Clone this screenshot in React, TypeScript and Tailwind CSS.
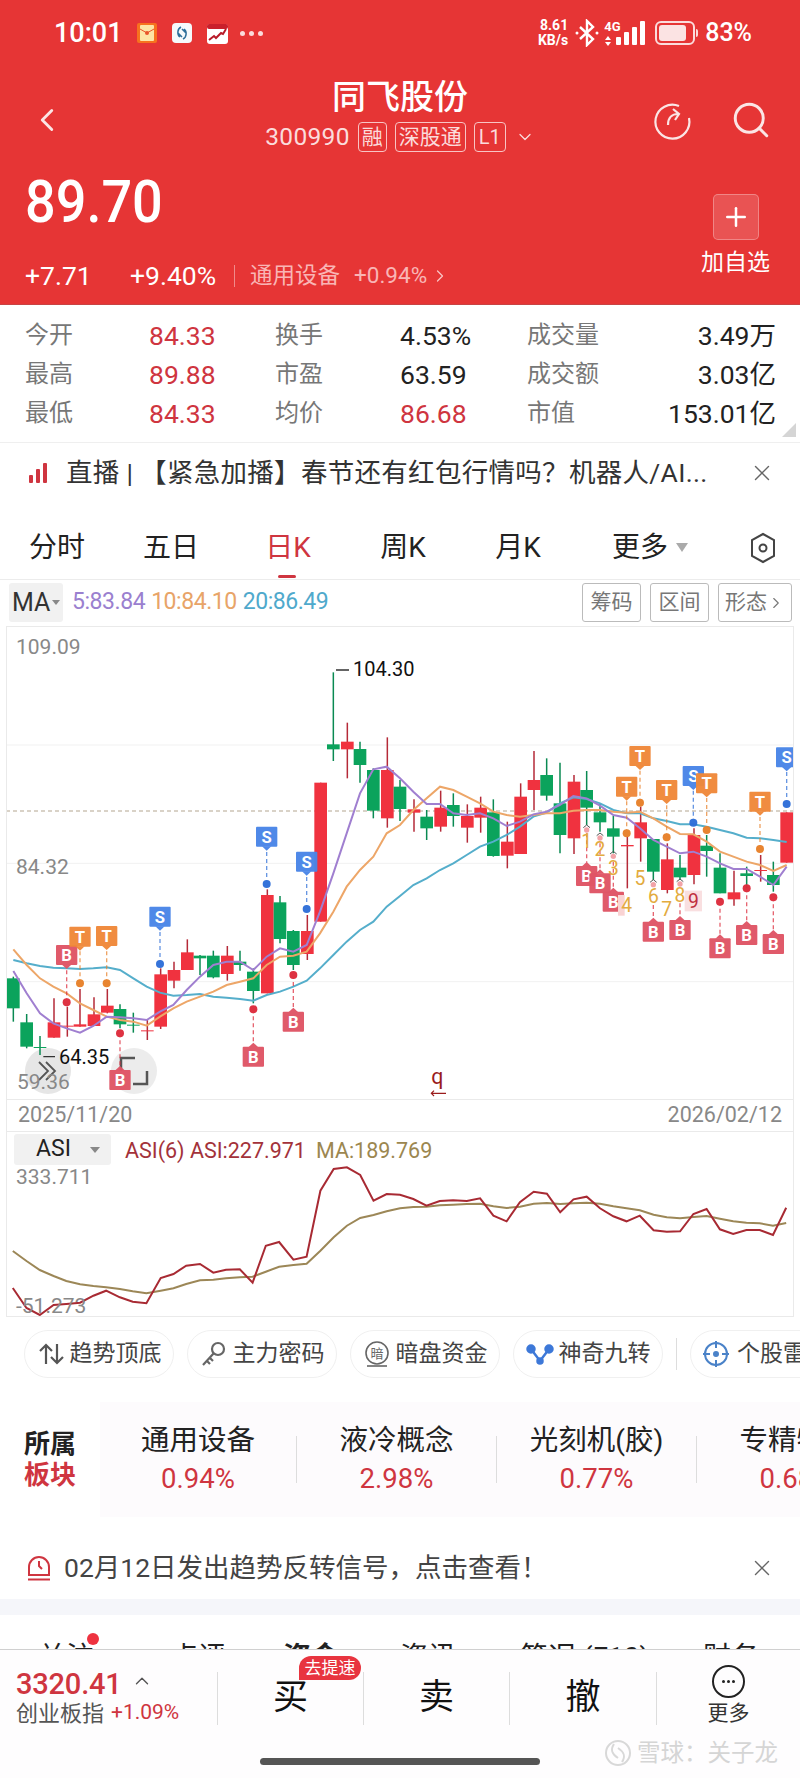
import { X, Plus, ChevronLeft, ChevronRight, ChevronDown, ChevronUp, Search } from "lucide-react";

// candles: [x, body top, body bottom, wick top, wick bottom, up?]  (coords are 3x page px, y from 640)
const candles: [number, number, number, number, number, boolean][] = [
  [40, 1015, 1105, 1010, 1145, false], [80, 1147, 1220, 1122, 1225, false], [120, 1221, 1224, 1188, 1245, false],
  [162, 1147, 1193, 1075, 1193, true], [202, 1157, 1160, 1100, 1190, true], [240, 1153, 1160, 1047, 1160, true],
  [282, 1123, 1158, 1072, 1158, true], [322, 1097, 1118, 1047, 1120, true], [360, 1107, 1153, 1093, 1165, false],
  [400, 1154, 1157, 1118, 1178, false], [442, 1171, 1174, 1140, 1200, true], [482, 1003, 1160, 985, 1167, true],
  [522, 990, 1022, 965, 1045, true], [562, 937, 990, 898, 990, true], [600, 947, 955, 945, 1005, false],
  [640, 947, 1012, 932, 1015, false], [682, 947, 1002, 918, 1022, true], [720, 965, 975, 932, 992, false],
  [760, 995, 1053, 985, 1090, false], [802, 765, 1060, 748, 1060, true], [840, 787, 897, 768, 910, false],
  [880, 873, 975, 870, 990, false], [922, 873, 942, 825, 960, true], [962, 428, 845, 428, 845, true],
  [1000, 313, 328, 97, 363, false], [1042, 305, 328, 248, 415, true], [1080, 327, 375, 305, 428, false],
  [1120, 390, 512, 385, 535, false], [1162, 390, 535, 292, 563, true], [1200, 440, 507, 420, 543, false],
  [1242, 508, 518, 478, 575, true], [1280, 530, 565, 510, 600, false], [1322, 503, 560, 452, 575, true],
  [1360, 495, 528, 460, 560, false], [1402, 528, 563, 493, 608, true], [1442, 503, 533, 470, 578, true],
  [1480, 517, 648, 478, 650, false], [1522, 605, 647, 545, 685, true], [1562, 470, 642, 430, 642, true],
  [1602, 420, 450, 333, 510, true], [1640, 405, 467, 355, 482, false], [1680, 490, 585, 368, 640, false],
  [1722, 425, 595, 405, 642, true], [1760, 450, 503, 393, 555, false], [1800, 517, 547, 490, 575, false],
  [1840, 565, 590, 528, 640, false], [1882, 615, 619, 590, 745, true], [1922, 547, 595, 500, 665, true],
  [1960, 597, 695, 597, 720, false], [2002, 658, 750, 610, 760, true], [2040, 683, 712, 645, 720, false],
  [2082, 585, 705, 565, 733, true], [2120, 617, 633, 585, 710, false], [2160, 683, 760, 640, 760, false],
  [2202, 757, 778, 692, 797, true], [2240, 700, 708, 680, 745, false], [2282, 690, 693, 645, 725, true],
  [2320, 705, 735, 665, 755, false], [2360, 517, 668, 517, 668, true],
];

const ma5 = "40,993 80,1060 120,1120 160,1150 200,1165 240,1178 280,1158 320,1130 360,1132 400,1135 440,1140 480,1115 520,1095 560,1050 600,1010 640,975 680,965 720,965 760,990 800,950 840,925 880,935 920,915 960,815 1000,700 1040,580 1080,460 1120,388 1160,380 1200,415 1240,455 1280,492 1320,492 1360,520 1400,525 1440,520 1480,535 1520,558 1560,545 1600,523 1640,515 1680,495 1720,468 1760,475 1800,497 1840,525 1880,533 1920,565 1960,600 2000,620 2040,640 2080,635 2120,650 2160,670 2200,687 2240,687 2280,710 2320,735 2360,680";
const ma10 = "40,928 80,975 120,1015 160,1040 200,1060 240,1090 280,1110 320,1130 360,1140 400,1145 440,1157 480,1130 520,1105 560,1085 600,1070 640,1055 680,1035 720,1025 760,1015 800,975 840,950 880,947 920,935 960,880 1000,815 1040,740 1080,690 1120,650 1160,580 1200,555 1240,510 1280,475 1320,440 1360,450 1400,470 1440,490 1480,515 1520,525 1560,530 1600,525 1640,520 1680,520 1720,512 1760,510 1800,510 1840,515 1880,518 1920,515 1960,535 2000,560 2040,582 2080,583 2120,605 2160,635 2200,650 2240,665 2280,675 2320,693 2360,675";
const ma20 = "40,960 80,970 120,978 160,983 200,985 240,987 280,985 320,982 360,990 400,1015 440,1040 480,1058 520,1067 560,1065 600,1062 640,1070 680,1073 720,1077 760,1082 800,1065 840,1055 880,1040 920,1022 960,985 1000,945 1040,905 1080,870 1120,845 1160,800 1200,768 1240,735 1280,715 1320,690 1360,670 1400,645 1440,620 1480,605 1520,585 1560,560 1600,530 1640,518 1680,490 1720,472 1760,477 1800,490 1840,510 1880,520 1920,520 1960,535 2000,543 2040,553 2080,553 2120,560 2160,570 2200,580 2240,593 2280,595 2320,600 2360,606";

type Mark = { t: "S" | "T" | "B"; x: number; y: number; dot?: number; from?: number };
const marks: Mark[] = [
  { t: "B", x: 200, y: 945, dot: 1087 }, { t: "T", x: 240, y: 890, dot: 1030 }, { t: "T", x: 320, y: 888, dot: 1030 },
  { t: "S", x: 480, y: 830, dot: 972 }, { t: "S", x: 800, y: 590, dot: 732 }, { t: "S", x: 920, y: 665, dot: 807 },
  { t: "B", x: 360, y: 1320, dot: 1180 }, { t: "B", x: 760, y: 1250, dot: 1108 }, { t: "B", x: 880, y: 1145, dot: 1005 },
  { t: "B", x: 1760, y: 708, from: 580 }, { t: "B", x: 1800, y: 730, from: 610 }, { t: "B", x: 1840, y: 785, from: 665 },
  { t: "B", x: 1960, y: 875, from: 795 }, { t: "B", x: 2040, y: 870, from: 790 }, { t: "B", x: 2160, y: 925, dot: 785 },
  { t: "B", x: 2240, y: 885, dot: 745 }, { t: "B", x: 2320, y: 912, dot: 772 },
  { t: "T", x: 1920, y: 348, dot: 488 }, { t: "T", x: 1880, y: 440, dot: 580 }, { t: "T", x: 2000, y: 450, dot: 592 },
  { t: "S", x: 2080, y: 408, dot: 548 }, { t: "T", x: 2120, y: 430, dot: 570 }, { t: "T", x: 2280, y: 485, dot: 627 },
  { t: "S", x: 2360, y: 352, dot: 492 },
];
const markColor = { S: "#4a86e8", T: "#f0893a", B: "#e05566" };
const dotColor = { S: "#2f6fd8", T: "#e8812a", B: "#dd2c3c" };

const nines: [string, number, number, boolean][] = [
  ["1", 1760, 603, true], ["2", 1800, 627, true], ["3", 1840, 682, true], ["4", 1880, 795, false], ["5", 1920, 713, false],
  ["6", 1960, 767, true], ["7", 2000, 807, false], ["8", 2040, 765, true], ["9", 2080, 782, false],
];

const asiRed = "25,537 52,597 78,618 105,588 130,585 157,581 183,560 208,545 235,565 260,578 287,583 315,507 340,495 365,470 392,465 418,491 443,482 470,481 495,521 521,410 547,399 575,452 601,443 628,245 654,180 680,175 706,198 732,275 758,255 784,257 810,270 836,290 862,276 888,274 915,276 941,268 967,320 993,337 1019,280 1046,248 1072,254 1098,310 1124,271 1150,263 1176,298 1202,322 1228,337 1254,320 1281,364 1307,368 1333,367 1359,315 1385,300 1411,361 1437,375 1463,363 1489,363 1515,378 1541,296";
const asiMa = "25,426 52,456 78,483 105,501 130,516 157,526 183,531 208,535 235,540 260,547 287,553 315,545 340,538 365,525 392,514 418,512 443,508 470,505 495,503 521,488 547,473 575,468 601,464 628,425 654,385 680,350 706,327 732,318 758,307 784,298 810,294 836,293 862,289 888,287 915,285 941,284 967,292 993,297 1019,293 1046,284 1072,282 1098,285 1124,283 1150,281 1176,284 1202,292 1228,298 1254,304 1281,317 1307,325 1333,328 1359,324 1385,321 1411,329 1437,337 1463,341 1489,343 1515,350 1541,342";
const asiPts = (s: string) =>
  s.split(" ").map((p) => {
    const [x, y] = p.split(",").map(Number);
    return `${(x / 1.96 - 6).toFixed(1)},${(y / 3 - 23).toFixed(1)}`;
  }).join(" ");

const stats = [
  ["今开", "84.33", "换手", "4.53%", "成交量", "3.49万"],
  ["最高", "89.88", "市盈", "63.59", "成交额", "3.03亿"],
  ["最低", "84.33", "均价", "86.68", "市值", "153.01亿"],
];

function KLine() {
  return (
    <svg viewBox="18 -42 2364 1419" className="absolute -left-px -top-px w-[788px] h-[473px]">
      {[315, 670, 1025].map((y) => (
        <line key={y} x1="18" x2="2382" y1={y} y2={y} stroke="#f1f1f1" strokeWidth="3" />
      ))}
      <line x1="18" x2="2382" y1="513" y2="513" stroke="#b3a58f" strokeWidth="3" strokeDasharray="12 9" />
      {candles.map(([x, t, b, wt, wb, up]) => (
        <g key={x}>
          <line x1={x} x2={x} y1={wt} y2={wb} stroke={up ? "#b52a38" : "#0a8a52"} strokeWidth="4.5" />
          <rect x={x - 19} y={t} width="38" height={b - t} fill={up ? "#f0323f" : "#0ba35c"} />
        </g>
      ))}
      <polyline points={ma20} fill="none" stroke="#55aecb" strokeWidth="6" />
      <polyline points={ma10} fill="none" stroke="#eda668" strokeWidth="6" />
      <polyline points={ma5} fill="none" stroke="#a07fd0" strokeWidth="6" />
      <path d="M1008 90H1047M130 1250H165" stroke="#333" strokeWidth="4" />
      {marks.map((m, i) => {
        const above = m.t !== "B" || m.x === 200;
        const dashA = m.dot ?? m.from ?? 0;
        const dashB = above ? m.y + 40 : m.y - 40;
        return (
          <g key={i} opacity={0.97}>
            <line x1={m.x} x2={m.x} y1={dashA} y2={dashB} stroke={dotColor[m.t]} strokeOpacity="0.75" strokeWidth="4" strokeDasharray="12 9" />
            {m.dot !== undefined && <circle cx={m.x} cy={m.dot} r="12" fill={dotColor[m.t]} />}
            <rect x={m.x - 32} y={m.y - 30} width="64" height="60" rx="3" fill={markColor[m.t]} />
            {m.t === "B" && m.x !== 200 ? (
              <path d={`M${m.x - 14} ${m.y - 29}L${m.x} ${m.y - 42}L${m.x + 14} ${m.y - 29}Z`} fill={markColor[m.t]} />
            ) : (
              <path d={`M${m.x - 14} ${m.y + 29}L${m.x} ${m.y + 42}L${m.x + 14} ${m.y + 29}Z`} fill={markColor[m.t]} />
            )}
            <text x={m.x} y={m.y + 18} textAnchor="middle" fill="#fff" fontSize="50" fontWeight="700" fontFamily="Roboto, sans-serif">{m.t}</text>
          </g>
        );
      })}
      {nines.map(([n, x, y, chevron]) => (
        <g key={n}>
          {n === "9" && <rect x={x - 26} y={y - 30} width="52" height="62" fill="#f9dfe0" />}
          {n === "4" && <rect x={x - 26} y={y - 30} width="20" height="62" fill="#f9d3d3" />}
          {chevron && (
            <>
              <path d={`M${x - 10} ${y - 40}L${x} ${y - 48}L${x + 10} ${y - 40}`} stroke="#555" strokeWidth="3" fill="none" />
              <circle cx={x} cy={y - 33} r="8" fill="#f2a3a8" />
            </>
          )}
          <text x={x} y={y + 22} textAnchor="middle" fill={n === "9" ? "#c03040" : "#e3ab3e"} fontSize="58" fontFamily="Roboto, sans-serif">{n}</text>
        </g>
      ))}
      <text x="1312" y="1332" textAnchor="middle" fill="#9a1c1c" fontSize="64" fontFamily="Roboto, sans-serif">q</text>
      <path d="M1338 1360H1294M1302 1352L1294 1360L1302 1368" stroke="#9a1c1c" strokeWidth="3.5" fill="none" />
    </svg>
  );
}

function StatusBar() {
  return (
    <div className="h-[66px] flex items-center pl-[54px] pr-[48px] text-white">
      <span className="text-[27px] font-medium w-[83px]">10:01</span>
      <svg width="20" height="20" viewBox="0 0 20 20" className="mr-[15px]">
        <rect width="20" height="20" rx="2" fill="#f7721e" />
        <rect x="3" y="2" width="14" height="16" rx="1" fill="#fde5a6" />
        <path d="M3 6l7 4 7-4" stroke="#e8552a" fill="none" />
        <circle cx="10" cy="10" r="2" fill="#e8552a" />
      </svg>
      <svg width="20" height="20" viewBox="0 0 20 20" className="mr-[15px]">
        <rect width="20" height="20" rx="4" fill="#f5f9fb" />
        <path d="M9 4C5 6 5 12 8 14M11 16c4-2 4-8 1-10M6 10l4 4M14 10l-4-4" stroke="#2d6f9a" strokeWidth="1.5" fill="none" />
      </svg>
      <svg width="21" height="21" viewBox="0 0 21 21" className="mr-[12px]">
        <rect y="1" width="21" height="20" rx="3" fill="#fff" />
        <rect y="1" width="21" height="5" rx="2" fill="#c9202c" />
        <path d="M2 17l5-4 2 2 5-5 2 1 3-5" stroke="#b81a28" strokeWidth="2" fill="none" />
      </svg>
      <span className="flex gap-[4px]">
        <i className="w-[5px] h-[5px] rounded-full bg-[#fbdcdc]" />
        <i className="w-[5px] h-[5px] rounded-full bg-[#fbdcdc]" />
        <i className="w-[5px] h-[5px] rounded-full bg-[#fbdcdc]" />
      </span>
      <div className="ml-auto flex items-center">
        <div className="text-[14px] font-bold leading-[15px] text-right w-[32px]">
          <div>8.61</div>
          <div>KB/s</div>
        </div>
        <svg width="26" height="28" viewBox="0 0 26 28" className="ml-[6px]" fill="none" stroke="#fff" strokeWidth="2.4">
          <path d="M6 8l13 12-6 6V2l6 6L6 20" />
          <circle cx="3" cy="14" r="1.5" fill="#fff" stroke="none" />
          <circle cx="23" cy="14" r="1.5" fill="#fff" stroke="none" />
        </svg>
        <div className="ml-[4px] w-[18px] text-[13px] font-bold leading-[14px]">
          4G
          <div className="flex flex-col items-center w-[8px] gap-[2px] mt-[2px]">
            <i className="w-0 h-0 border-x-[3px] border-x-transparent border-b-[4px] border-b-white" />
            <i className="w-0 h-0 border-x-[3px] border-x-transparent border-t-[4px] border-t-white" />
          </div>
        </div>
        <div className="flex items-end gap-[3px] h-[24px] -ml-[6px]">
          <i className="w-[5px] h-[8px] bg-white rounded-[1px]" />
          <i className="w-[5px] h-[13px] bg-white rounded-[1px]" />
          <i className="w-[5px] h-[18px] bg-white rounded-[1px]" />
          <i className="w-[5px] h-[24px] bg-white rounded-[1px]" />
        </div>
        <div className="ml-[10px] w-[40px] h-[24px] rounded-[6px] border-2 border-[#fbdcdc] p-[2px]">
          <div className="w-[83%] h-full bg-[#fbe3e3] rounded-[3px]" />
        </div>
        <i className="w-[2px] h-[8px] bg-[#fbdcdc] ml-[1px] rounded-r" />
        <span className="ml-[7px] text-[25px] font-medium">83%</span>
      </div>
    </div>
  );
}

function Header() {
  return (
    <div className="h-[305px] bg-[#e63535] border-b border-[#c84444] text-white shrink-0">
      <StatusBar />
      <div className="mt-[8px] h-[92px] grid grid-cols-[1fr_auto_1fr]">
        <div className="flex items-center pl-[28px]">
          <ChevronLeft size={38} strokeWidth={1.8} className="text-[#fbe5e5]" />
        </div>
        <div className="flex flex-col items-center">
          <div className="text-[34px] leading-[46px] h-[46px] font-medium">同飞股份</div>
          <div className="h-[34px] flex items-center text-[#fbdcdc]">
            <span className="text-[24.5px] tracking-[0.3px] mr-[8px]">300990</span>
            <span className="h-[30px] px-[3px] border border-[#f8c4c4] rounded-[4px] text-[21px] leading-[28px]">融</span>
            <span className="ml-[8px] h-[30px] px-[3px] border border-[#f8c4c4] rounded-[4px] text-[21px] leading-[28px]">深股通</span>
            <span className="ml-[8px] h-[30px] px-[4px] border border-[#f8c4c4] rounded-[4px] text-[20px] leading-[28px]">L1</span>
            <ChevronDown size={20} strokeWidth={1.5} className="ml-[9px]" />
          </div>
        </div>
        <div className="flex items-center justify-end pr-[28px] gap-[38px] text-[#fbe5e5]">
          <svg width="40" height="40" viewBox="0 0 40 40" fill="none" stroke="currentColor" strokeWidth="2.2">
            <path d="M27 6A17 17 0 1 0 37 18" />
            <path d="M16 25c0-7 4-11 10-11M21 9l6 5-4 6" />
          </svg>
          <Search size={42} strokeWidth={1.7} />
        </div>
      </div>
      <div className="flex justify-between">
        <div className="pl-[25px]">
          <div className="h-[72px] text-[54px] leading-[72px] font-medium scale-y-110 origin-center">89.70</div>
          <div className="mt-[21px] h-[34px] flex items-center">
            <span className="text-[26.5px] w-[105px]">+7.71</span>
            <span className="text-[26.5px] w-[104px]">+9.40%</span>
            <i className="w-px h-[22px] bg-[#f08a8a]" />
            <span className="ml-[15px] text-[22.5px] text-[#f9b5b5]">通用设备</span>
            <span className="ml-[14px] text-[22.5px] text-[#f9b5b5]">+0.94%</span>
            <ChevronRight size={20} strokeWidth={1.5} className="text-[#f9c5c5] ml-[3px]" />
          </div>
        </div>
        <div className="pr-[30px] pt-[28px] flex flex-col items-center w-[99px] shrink-0">
          <div className="w-[46px] h-[46px] rounded-[5px] bg-white/15 border border-white/30 flex items-center justify-center">
            <Plus size={30} strokeWidth={2} />
          </div>
          <div className="mt-[8px] h-[30px] text-[23px] leading-[30px] whitespace-nowrap">加自选</div>
        </div>
      </div>
    </div>
  );
}

function Tabs() {
  return (
    <div className="h-[64px] flex items-center border-b border-[#ececec] text-[#222] text-[28px]">
      <div className="w-[114px] text-center">分时</div>
      <div className="w-[114px] text-center">五日</div>
      <div className="relative w-[120px] h-full flex items-center justify-center text-[#cf3540]">
        日K
        <i className="absolute left-[50px] bottom-[1px] w-[18px] h-[3px] rounded bg-[#cf3540]" />
      </div>
      <div className="w-[110px] text-center">周K</div>
      <div className="w-[120px] text-center">月K</div>
      <div className="w-[124px] flex items-center justify-center pl-[20px]">
        更多
        <i className="ml-[8px] w-0 h-0 border-x-[6px] border-x-transparent border-t-[9px] border-t-[#aaa]" />
      </div>
      <div className="flex-1 flex justify-center pl-[24px]">
        <svg width="28" height="32" viewBox="0 0 28 32" fill="none" stroke="#444" strokeWidth="2">
          <path d="M14 2l11 6v16l-11 6-11-6V8z" />
          <circle cx="14" cy="16" r="3.5" />
        </svg>
      </div>
    </div>
  );
}

const chips = [
  { label: "趋势顶底", icon: <svg width="28" height="28" viewBox="0 0 28 28" fill="none" stroke="#555" strokeWidth="2.2"><path d="M9 24V5M3 11l6-6 6 6M20 4v19M14 17l6 6 6-6" /></svg> },
  { label: "主力密码", icon: <svg width="28" height="28" viewBox="0 0 28 28" fill="none" stroke="#666" strokeWidth="2.2"><circle cx="18" cy="9" r="6" /><path d="M14 13L3 25M7 21l3 3M10 18l3 3" /></svg> },
  { label: "暗盘资金", icon: <svg width="28" height="28" viewBox="0 0 28 28" fill="none" stroke="#666" strokeWidth="1.6"><circle cx="14" cy="13" r="11" /><path d="M4 26h20" /><text x="14" y="18" textAnchor="middle" fontSize="13" fill="#666" stroke="none" fontFamily="Noto Sans CJK SC">暗</text></svg> },
  { label: "神奇九转", icon: <svg width="28" height="28" viewBox="0 0 28 28" fill="none" stroke="#3d78d8" strokeWidth="2.5"><path d="M5 9l9 12 9-12" /><circle cx="5" cy="9" r="3.5" fill="#3d78d8" /><circle cx="23" cy="9" r="3.5" fill="#3d78d8" /><circle cx="14" cy="21" r="2.5" fill="#3d78d8" /></svg> },
];

function Chips() {
  return (
    <div className="mt-[13px] h-[48px] pl-[24px] flex items-center gap-[13px] overflow-hidden">
      {chips.map((c) => (
        <div key={c.label} className="w-[150px] h-[48px] shrink-0 rounded-[24px] border border-[#f0f0f0] flex items-center justify-center gap-[5px] text-[#444] text-[23px]">
          {c.icon}
          <span>{c.label}</span>
        </div>
      ))}
      <i className="w-px h-[32px] shrink-0 bg-[#ddd]" />
      <div className="w-[150px] h-[48px] shrink-0 rounded-[24px] border border-[#f0f0f0] flex items-center pl-[12px] gap-[8px] text-[#444] text-[23px] whitespace-nowrap">
        <svg width="26" height="26" viewBox="0 0 26 26" className="shrink-0" fill="none" stroke="#4a82c8" strokeWidth="2">
          <circle cx="13" cy="13" r="11" />
          <path d="M13 0v7M13 19v7M0 13h7M19 13h7" />
          <circle cx="13" cy="13" r="2" fill="#4a82c8" />
        </svg>
        个股雷达
      </div>
    </div>
  );
}

const boards = [
  ["通用设备", "0.94%", "w-[196px]"],
  ["液冷概念", "2.98%", "w-[199px]"],
  ["光刻机(胶)", "0.77%", "w-[199px]"],
  ["专精特新", "0.68%", "w-[199px]"],
];

export default function App() {
  return (
    <div className="w-[800px] h-[1778px] bg-white overflow-hidden relative font-[family-name:Roboto,'Noto_Sans_CJK_SC',sans-serif]">
      <Header />

      {/* quote table */}
      <div className="relative h-[138px] pt-[11px] pl-[25px] border-b border-[#efefef]">
        <div className="grid grid-cols-[124px_126px_125px_127px_100px_149px] text-[24px] leading-[39px]">
          {stats.map((row) =>
            row.map((cell, i) => (
              <div
                key={row[0] + i}
                className={
                  i % 2 === 0
                    ? "text-[#777]"
                    : i === 5
                      ? "text-right text-[#222] text-[26.5px] whitespace-nowrap"
                      : (i === 1 || cell === "86.68")
                        ? "text-[#cf3540] text-[26.5px]"
                        : "text-[#222] text-[26.5px]"
                }
              >
                {cell}
              </div>
            ))
          )}
        </div>
        <i className="absolute right-[4px] bottom-[5px] w-0 h-0 border-l-[14px] border-l-transparent border-b-[14px] border-b-[#d5d5d5]" />
      </div>

      {/* live banner */}
      <div className="h-[60px] mb-[13px] pl-[29px] pr-[25px] flex items-center">
        <div className="flex items-end gap-[3px] h-[20px] w-[21px]">
          <i className="w-[4px] h-[8px] bg-[#cf3540] rounded-[1px]" />
          <i className="w-[4px] h-[14px] bg-[#cf3540] rounded-[1px]" />
          <i className="w-[4px] h-[20px] bg-[#cf3540] rounded-[1px]" />
        </div>
        <span className="ml-[16px] text-[26.5px] tracking-[0.3px] text-[#333] whitespace-nowrap w-[660px] overflow-hidden">直播 | 【紧急加播】春节还有红包行情吗？机器人/AI...</span>
        <X size={26} strokeWidth={1.3} className="ml-auto text-[#666]" />
      </div>

      <Tabs />

      {/* MA row */}
      <div className="h-[46px] pt-[3px] pl-[9px] pr-[8px] flex items-start">
        <div className="w-[54px] h-[39px] bg-[#f1f1f1] rounded-[3px] flex items-center pl-[3px] text-[25px] text-[#333]">
          MA
          <i className="ml-[2px] w-0 h-0 border-x-[4px] border-x-transparent border-t-[5px] border-t-[#888]" />
        </div>
        <div className="ml-[9px] h-[39px] flex items-center gap-[6px] text-[23px] tracking-[-0.45px]">
          <span className="text-[#9a80cf]">5:83.84</span>
          <span className="text-[#e8a468]">10:84.10</span>
          <span className="text-[#4fa9cc]">20:86.49</span>
        </div>
        <div className="ml-auto flex gap-[9px] text-[21px] text-[#777]">
          <div className="w-[59px] h-[39px] border border-[#bbb] rounded-[3px] flex items-center justify-center">筹码</div>
          <div className="w-[59px] h-[39px] border border-[#bbb] rounded-[3px] flex items-center justify-center">区间</div>
          <div className="w-[74px] h-[39px] border border-[#bbb] rounded-[3px] flex items-center justify-center">
            形态<ChevronRight size={18} strokeWidth={1.5} />
          </div>
        </div>
      </div>

      {/* kline */}
      <div className="relative mx-[6px] h-[473px] border-x border-t border-[#eaeaea] overflow-hidden">
        <div className="absolute left-[18px] top-[421px] w-[46px] h-[46px] rounded-full bg-[#e6e6e6] flex items-center justify-center">
          <svg width="24" height="22" viewBox="0 0 24 22" fill="none" stroke="#555" strokeWidth="1.8"><path d="M3 2l9 9-9 9M10 2l9 9-9 9" /></svg>
        </div>
        <div className="absolute left-[104px] top-[421px] w-[46px] h-[46px] rounded-full bg-[#ececec] flex items-center justify-center">
          <svg width="30" height="30" viewBox="0 0 30 30" fill="none" stroke="#555" strokeWidth="2.5"><path d="M2 15V2h14M28 15v13H14" /></svg>
        </div>
        <KLine />
        <span className="absolute left-[9px] top-[10px] text-[21px] leading-[20px] text-[#888]">109.09</span>
        <span className="absolute left-[9px] top-[230px] text-[21px] leading-[20px] text-[#888]">84.32</span>
        <span className="absolute left-[10px] top-[445px] text-[21px] leading-[20px] text-[#888]">59.36</span>
        <span className="absolute left-[346px] top-[30px] text-[20px] leading-[24px] text-[#111]">104.30</span>
        <span className="absolute left-[52px] top-[418px] text-[20px] leading-[24px] text-[#111]">64.35</span>
      </div>

      {/* date axis */}
      <div className="mx-[6px] h-[33px] px-[11px] flex items-center justify-between border border-[#eaeaea] text-[21.5px] text-[#888]">
        <span>2025/11/20</span>
        <span>2026/02/12</span>
      </div>

      {/* ASI */}
      <div className="relative mx-[6px] h-[185px] border-x border-b border-[#eaeaea]">
        <svg viewBox="0 0 788 184" className="absolute -left-px top-0 w-[788px] h-[184px]">
          <polyline points={asiPts(asiMa)} fill="none" stroke="#9c8757" strokeWidth="2" />
          <polyline points={asiPts(asiRed)} fill="none" stroke="#a82a33" strokeWidth="2" />
        </svg>
        <div className="relative pt-[2px] pl-[7px] flex items-start">
          <div className="w-[97px] h-[31px] bg-[#f1f1f1] rounded-[3px] flex items-center text-[23px] text-[#222] pl-[22px]">
            ASI
            <i className="ml-[19px] w-0 h-0 border-x-[5px] border-x-transparent border-t-[6px] border-t-[#888]" />
          </div>
          <span className="ml-[14px] h-[31px] leading-[33px] text-[21.5px] text-[#a3323a]">ASI(6) ASI:227.971</span>
          <span className="ml-[10px] h-[31px] leading-[33px] text-[21.5px] text-[#9c8750]">MA:189.769</span>
        </div>
        <span className="absolute left-[9px] top-[34px] text-[21px] leading-[22px] text-[#888]">333.711</span>
        <span className="absolute left-[9px] top-[163px] text-[21px] leading-[22px] text-[#888]">-51.273</span>
      </div>

      <Chips />

      {/* sector strip */}
      <div className="mt-[24px] h-[115px] flex">
        <div className="w-[100px] shrink-0 pl-[24px] flex flex-col justify-center text-[26px] leading-[31px] font-bold">
          <span className="text-[#222]">所属</span>
          <span className="text-[#cf3540]">板块</span>
        </div>
        <div className="flex-1 flex items-center bg-[#fdfbfd] overflow-hidden">
          {boards.map(([name, pct, w], i) => (
            <div key={name} className="flex items-center shrink-0">
              <div className={`${w} shrink-0 flex flex-col items-center`}>
                <span className="text-[28.5px] leading-[38px] text-[#222] whitespace-nowrap">{name}</span>
                <span className="text-[27.5px] leading-[38px] text-[#cf3540]">{pct}</span>
              </div>
              {i < 3 && <i className="w-px h-[47px] bg-[#ddd] shrink-0" />}
            </div>
          ))}
        </div>
      </div>

      {/* signal notice */}
      <div className="h-[82px] pt-[20px] pl-[27px] pr-[25px] flex items-center">
        <svg width="24" height="26" viewBox="0 0 24 26" fill="none" stroke="#cf3540" strokeWidth="2">
          <path d="M2 20v-8a10 10 0 0 1 20 0v8zM12 6v5l3 3" />
          <path d="M1 24.500h22" />
        </svg>
        <span className="ml-[13px] text-[26.5px] text-[#444]">02月12日发出趋势反转信号，点击查看！</span>
        <X size={26} strokeWidth={1.3} className="ml-auto text-[#666]" />
      </div>

      <div className="h-[16px] bg-[#f5f6fa]" />

      {/* cut off by the bottom bar */}
      <div className="relative h-[34px] overflow-hidden pt-[27px] pl-[38px] flex text-[28px] leading-[32px] text-[#222] whitespace-nowrap">
        <span className="w-[132px]">关注</span>
        <span className="w-[113px]">点评</span>
        <span className="w-[117px] font-bold">资金</span>
        <span className="w-[120px]">资讯</span>
        <span className="w-[183px]">简况 (F10)</span>
        <span>财务</span>
        <i className="absolute left-[87px] top-[18px] w-[12px] h-[12px] rounded-full bg-[#ee3340]" />
      </div>

      {/* bottom bar */}
      <div className="h-[129px] border-t border-[#d0d0d0] bg-[#fefdfe]">
        <div className="h-[96px] flex items-center">
          <div className="w-[217px] shrink-0 pl-[16px]">
            <div className="flex items-center h-[30px]">
              <span className="text-[29px] leading-[30px] text-[#cf3540] font-medium tracking-[-0.2px]">3320.41</span>
              <ChevronUp size={22} strokeWidth={1.5} className="ml-[9px] text-[#555] -mt-[6px]" />
            </div>
            <div className="flex items-center h-[28px] mt-[0px]">
              <span className="text-[22px] text-[#555]">创业板指</span>
              <span className="ml-[7px] text-[21px] text-[#cf3540]">+1.09%</span>
            </div>
          </div>
          <i className="w-px h-[53px] bg-[#ddd] shrink-0" />
          <div className="relative w-[145px] h-full flex items-center justify-center text-[35px] text-[#111]">
            买
            <span className="absolute left-[81px] top-[6px] w-[62px] h-[24px] bg-[#e8343f] rounded-tl-[12px] rounded-tr-[12px] rounded-br-[12px] text-white text-[17px] leading-[24px] text-center">去提速</span>
          </div>
          <i className="w-px h-[53px] bg-[#ddd] shrink-0" />
          <div className="w-[145px] flex justify-center text-[35px] text-[#111]">卖</div>
          <i className="w-px h-[53px] bg-[#ddd] shrink-0" />
          <div className="w-[146px] flex justify-center text-[35px] text-[#111]">撤</div>
          <i className="w-px h-[53px] bg-[#ddd] shrink-0" />
          <div className="flex-1 flex flex-col items-center -mt-[6px]">
            <div className="w-[33px] h-[33px] rounded-full border-2 border-[#222] flex items-center justify-center gap-[2px]">
              <i className="w-[3px] h-[3px] rounded-full bg-[#222]" />
              <i className="w-[3px] h-[3px] rounded-full bg-[#222]" />
              <i className="w-[3px] h-[3px] rounded-full bg-[#222]" />
            </div>
            <span className="mt-[2px] text-[21px] leading-[26px] text-[#333]">更多</span>
          </div>
        </div>
        <div className="mt-[12px] mx-auto w-[280px] h-[7px] rounded-full bg-[#555]" />
      </div>

      {/* watermark */}
      <div className="absolute right-[22px] top-[1736px] flex items-center gap-[5px] text-[#d5d5d5] text-[23.5px] leading-[34px]">
        <svg width="28" height="30" viewBox="0 0 28 30" fill="none" stroke="#d8d8d8" strokeWidth="2">
          <circle cx="14" cy="15" r="12" />
          <path d="M10 6c-4 6-2 10 4 14M18 24c4-6 2-10-4-14" />
        </svg>
        雪球：关子龙
      </div>
    </div>
  );
}
